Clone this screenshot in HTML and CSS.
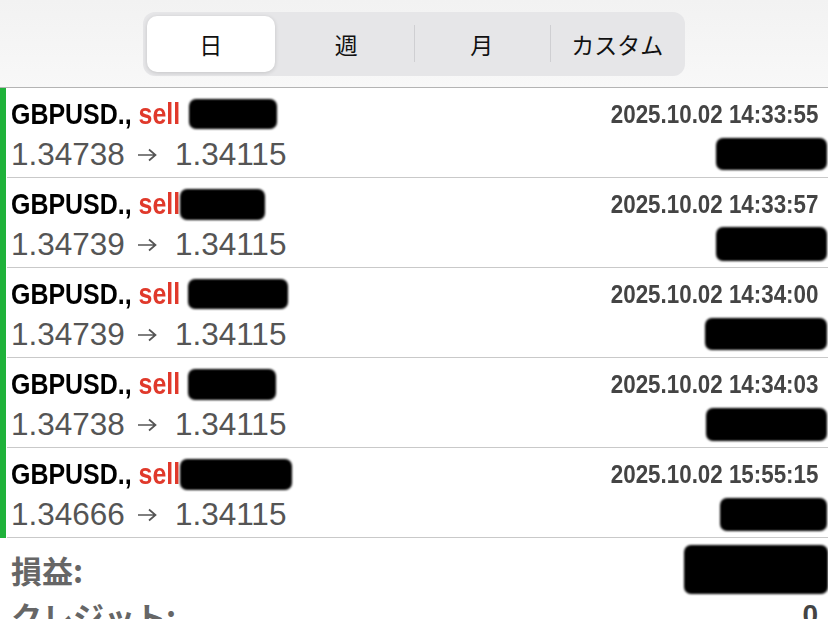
FILE: index.html
```html
<!DOCTYPE html>
<html lang="ja">
<head>
  <meta charset="UTF-8">
  <meta name="viewport" content="width=device-width, initial-scale=1.0">
  <title>履歴</title>
  <link rel="stylesheet" href="styles.css">
</head>
<body>
  <header class="top-bar">
    <div class="segmented">
      <div class="segment active">日</div>
      <div class="segment">週</div>
      <div class="segment divided">月</div>
      <div class="segment divided">カスタム</div>
    </div>
  </header>

  <ul class="deals">
    <li class="deal">
      <span class="stripe"></span>
      <div class="deal-body">
        <div class="line">
          <span class="title"><span class="name">GBPUSD., <span class="side">sell</span></span><span class="blot blot-1"></span></span>
          <span class="time">2025.10.02 14:33:55</span>
        </div>
        <div class="line">
          <span class="price">1.34738<svg class="arrow" viewBox="0 0 20 14"><path d="M1 7h17M12 1.5l6.5 5.5-6.5 5.5"/></svg>1.34115</span>
          <span class="blot profit p-1"></span>
        </div>
      </div>
    </li>
    <li class="deal">
      <span class="stripe"></span>
      <div class="deal-body">
        <div class="line">
          <span class="title"><span class="name">GBPUSD., <span class="side">sell</span></span><span class="blot blot-2"></span></span>
          <span class="time">2025.10.02 14:33:57</span>
        </div>
        <div class="line">
          <span class="price">1.34739<svg class="arrow" viewBox="0 0 20 14"><path d="M1 7h17M12 1.5l6.5 5.5-6.5 5.5"/></svg>1.34115</span>
          <span class="blot profit p-2"></span>
        </div>
      </div>
    </li>
    <li class="deal">
      <span class="stripe"></span>
      <div class="deal-body">
        <div class="line">
          <span class="title"><span class="name">GBPUSD., <span class="side">sell</span></span><span class="blot blot-3"></span></span>
          <span class="time">2025.10.02 14:34:00</span>
        </div>
        <div class="line">
          <span class="price">1.34739<svg class="arrow" viewBox="0 0 20 14"><path d="M1 7h17M12 1.5l6.5 5.5-6.5 5.5"/></svg>1.34115</span>
          <span class="blot profit p-3"></span>
        </div>
      </div>
    </li>
    <li class="deal">
      <span class="stripe"></span>
      <div class="deal-body">
        <div class="line">
          <span class="title"><span class="name">GBPUSD., <span class="side">sell</span></span><span class="blot blot-4"></span></span>
          <span class="time">2025.10.02 14:34:03</span>
        </div>
        <div class="line">
          <span class="price">1.34738<svg class="arrow" viewBox="0 0 20 14"><path d="M1 7h17M12 1.5l6.5 5.5-6.5 5.5"/></svg>1.34115</span>
          <span class="blot profit p-4"></span>
        </div>
      </div>
    </li>
    <li class="deal">
      <span class="stripe"></span>
      <div class="deal-body">
        <div class="line">
          <span class="title"><span class="name">GBPUSD., <span class="side">sell</span></span><span class="blot blot-5"></span></span>
          <span class="time">2025.10.02 15:55:15</span>
        </div>
        <div class="line">
          <span class="price">1.34666<svg class="arrow" viewBox="0 0 20 14"><path d="M1 7h17M12 1.5l6.5 5.5-6.5 5.5"/></svg>1.34115</span>
          <span class="blot profit p-5"></span>
        </div>
      </div>
    </li>
  </ul>

  <section class="summary">
    <div class="sum-row">
      <span class="sum-label">損益:</span>
      <span class="blot sum-blot"></span>
    </div>
    <div class="sum-row">
      <span class="sum-label">クレジット:</span>
      <span class="sum-value">0</span>
    </div>
  </section>
</body>
</html>
```

FILE: styles.css
```css
body {
  margin: 0;
  width: 828px;
  height: 619px;
  overflow: hidden;
  background: #fff;
  font-family: "Liberation Sans", Arial, sans-serif;
}

.top-bar {
  height: 88px;
  box-sizing: border-box;
  padding-top: 12px;
  padding-left: 143px;
  background: linear-gradient(to bottom, #f2f2f2, #f8f8f8);
  border-bottom: 1px solid #b4b4b4;
}

.segmented {
  display: grid;
  grid-template-columns: repeat(4, 1fr);
  width: 542px;
  height: 64px;
  border-radius: 12px;
  background: #e6e6e8;
}

.segment {
  display: flex;
  align-items: center;
  justify-content: center;
  position: relative;
  font-family: "Noto Sans CJK JP", sans-serif;
  font-size: 23px;
  color: #111;
}

.segment.active {
  margin: 4px 4px;
  background: #fff;
  border-radius: 10px;
  box-shadow: 0 1px 4px rgba(0, 0, 0, 0.15);
}

.segment.divided::before {
  content: "";
  position: absolute;
  left: 0;
  top: 13px;
  bottom: 14px;
  width: 1px;
  background: #cfcfd2;
}

.deals {
  list-style: none;
  margin: 0;
  padding: 0;
}

.deal {
  display: flex;
  height: 90px;
}

.stripe {
  width: 6px;
  background: #1fb23a;
  margin-right: 1px;
}

.deal-body {
  flex: 1;
  box-sizing: border-box;
  padding: 6px 1px 0 4px;
  border-bottom: 1px solid #c9c9c9;
}

.line {
  display: flex;
  justify-content: space-between;
  align-items: center;
  height: 40px;
}

.title {
  display: flex;
  align-items: center;
}

.name {
  display: inline-block;
  font-weight: bold;
  font-size: 30px;
  color: #000;
  white-space: pre;
  transform: scaleX(0.832);
  transform-origin: left center;
  margin-right: -34px;
}

.side {
  color: #e0392b;
}

.time {
  display: inline-block;
  margin-right: 9px;
  font-weight: bold;
  font-size: 26px;
  color: #444;
  transform: scaleX(0.86);
  transform-origin: right center;
}

.price {
  display: flex;
  align-items: center;
  font-size: 31.5px;
  color: #555;
}

.arrow {
  width: 20px;
  height: 14px;
  margin: 1px 18px 0 12px;
  fill: none;
  stroke: #555;
  stroke-width: 1.7;
}

.blot {
  display: inline-block;
  background: #000;
  border-radius: 7px;
  filter: blur(1px);
}

.blot-1 { width: 88px; height: 30px; margin-left: 9px; }
.blot-2 { width: 85px; height: 31px; margin-left: 0; }
.blot-3 { width: 100px; height: 30px; margin-left: 8px; }
.blot-4 { width: 88px; height: 31px; margin-left: 8px; }
.blot-5 { width: 112px; height: 31px; margin-left: 0; }

.profit { height: 32px; }
.p-1 { width: 111px; }
.p-2 { width: 111px; height: 34px; }
.p-3 { width: 122px; }
.p-4 { width: 121px; height: 33px; }
.p-5 { width: 107px; height: 33px; }

.summary {
  padding: 8px 10px 0 11px;
}

.sum-row {
  display: flex;
  justify-content: space-between;
  align-items: center;
  height: 46px;
}

.sum-label {
  font-family: "Noto Sans CJK JP", sans-serif;
  font-weight: bold;
  font-size: 31px;
  color: #666;
}

.sum-blot {
  width: 144px;
  height: 49px;
  margin-right: -10px;
}

.sum-value {
  font-weight: bold;
  font-size: 28px;
  color: #444;
}
```
